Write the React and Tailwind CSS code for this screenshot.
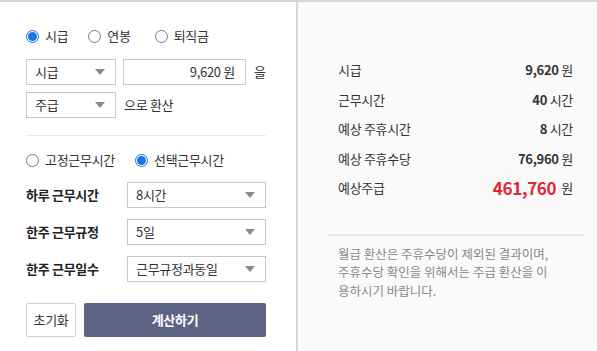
import { Fragment } from 'react';

const font = { fontFamily: '"Noto Sans CJK KR", "Noto Sans", sans-serif' };

const Radio = ({ checked, label }) => (
  <label className="flex items-center gap-[6px] text-[13px] tracking-[-0.3px] text-[#333]">
    {checked ? (
      <span className="flex h-[13px] w-[13px] items-center justify-center rounded-full border border-[#1a73e8] bg-white">
        <span className="h-[9px] w-[9px] rounded-full bg-[#1a73e8]" />
      </span>
    ) : (
      <span className="h-[13px] w-[13px] rounded-full border border-[#777] bg-white" />
    )}
    {label}
  </label>
);

const Select = ({ value, className }) => (
  <div
    className={`flex h-[26px] items-center justify-between border border-[#c8c8c8] bg-white pl-[8px] pr-[10px] text-[13px] tracking-[-0.3px] text-[#333] ${className}`}
  >
    <span>{value}</span>
    <svg width="10" height="6" viewBox="0 0 10 6">
      <path d="M0 0h10L5 6z" fill="#8a8a8a" />
    </svg>
  </div>
);

const results = [
  { label: '시급', value: '9,620', unit: '원' },
  { label: '근무시간', value: '40', unit: '시간' },
  { label: '예상 주휴시간', value: '8', unit: '시간' },
  { label: '예상 주휴수당', value: '76,960', unit: '원' },
];

const rows = [
  { label: '하루 근무시간', value: '8시간' },
  { label: '한주 근무규정', value: '5일' },
  { label: '한주 근무일수', value: '근무규정과동일' },
];

export default function App() {
  return (
    <div style={font} className="flex h-[351px] w-[597px] border-t-2 border-[#d6d6d6] bg-white">
      <div className="flex w-[298px] flex-col border-r-2 border-[#d6d6d6] pl-[26px] pr-[30px] pt-[24px]">
        <div className="flex h-5 items-center">
          <Radio checked label="시급" />
          <div className="ml-[20px]">
            <Radio label="연봉" />
          </div>
          <div className="ml-[24px]">
            <Radio label="퇴직금" />
          </div>
        </div>

        <div className="mt-[13px] flex items-center">
          <Select value="시급" className="w-[90px]" />
          <div className="ml-[7px] flex h-[26px] w-[123px] items-center justify-end border border-[#c8c8c8] pr-[10px] text-[13px] tracking-[-0.3px] text-[#333]">
            9,620 원
          </div>
          <span className="ml-[8px] text-[13px] text-[#333]">을</span>
        </div>

        <div className="mt-[7px] flex items-center">
          <Select value="주급" className="w-[90px]" />
          <span className="ml-[8px] text-[13px] tracking-[-0.3px] text-[#333]">으로 환산</span>
        </div>

        <div className="mt-[17px] h-px w-[240px] bg-[#eaeaea]" />

        <div className="mt-[14px] flex h-5 items-center">
          <Radio label="고정근무시간" />
          <div className="ml-[20px]">
            <Radio checked label="선택근무시간" />
          </div>
        </div>

        {rows.map((r, i) => (
          <div key={r.label} className={`flex items-center ${i === 0 ? 'mt-[12px]' : 'mt-[11px]'}`}>
            <span className="w-[101px] text-[13px] font-semibold tracking-[-0.3px] text-[#222]">{r.label}</span>
            <Select value={r.value} className="w-[139px]" />
          </div>
        ))}

        <div className="mt-[21px] flex h-[34px] gap-[8px]">
          <button className="w-[50px] rounded-[2px] border border-[#d0d0d0] bg-white text-[13px] tracking-[-0.3px] text-[#333]">
            초기화
          </button>
          <button className="w-[182px] rounded-[2px] bg-[#5d6385] text-[13px] font-bold tracking-[-0.3px] text-white">
            계산하기
          </button>
        </div>
      </div>

      <div className="flex flex-1 flex-col bg-[#fafafa] pl-[29px] pr-[13px] pt-[53px]">
        <div className="px-[11px]">
          {results.map((r) => (
            <div key={r.label} className="flex h-[29.5px] items-center justify-between text-[13px] tracking-[-0.3px] text-[#333]">
              <span>{r.label}</span>
              <span>
                <span className="font-bold">{r.value}</span> {r.unit}
              </span>
            </div>
          ))}
          <div className="flex h-[29.5px] items-center justify-between text-[13px] tracking-[-0.3px] text-[#333]">
            <span>예상주급</span>
            <span className="flex items-center gap-[5px]">
              <span className="text-[17px] font-bold text-[#e5243b]">461,760</span>
              <span>원</span>
            </span>
          </div>
        </div>

        <div className="mt-[31px] h-[2px] bg-[#ebebeb]" />

        <p className="mt-[9px] whitespace-nowrap px-[11px] text-[12.5px] leading-[18.5px] text-[#888]">
          {['월급 환산은 주휴수당이 제외된 결과이며,', '주휴수당 확인을 위해서는 주급 환산을 이', '용하시기 바랍니다.'].map((l, i) => (
            <Fragment key={i}>
              {l}
              <br />
            </Fragment>
          ))}
        </p>
      </div>
    </div>
  );
}
